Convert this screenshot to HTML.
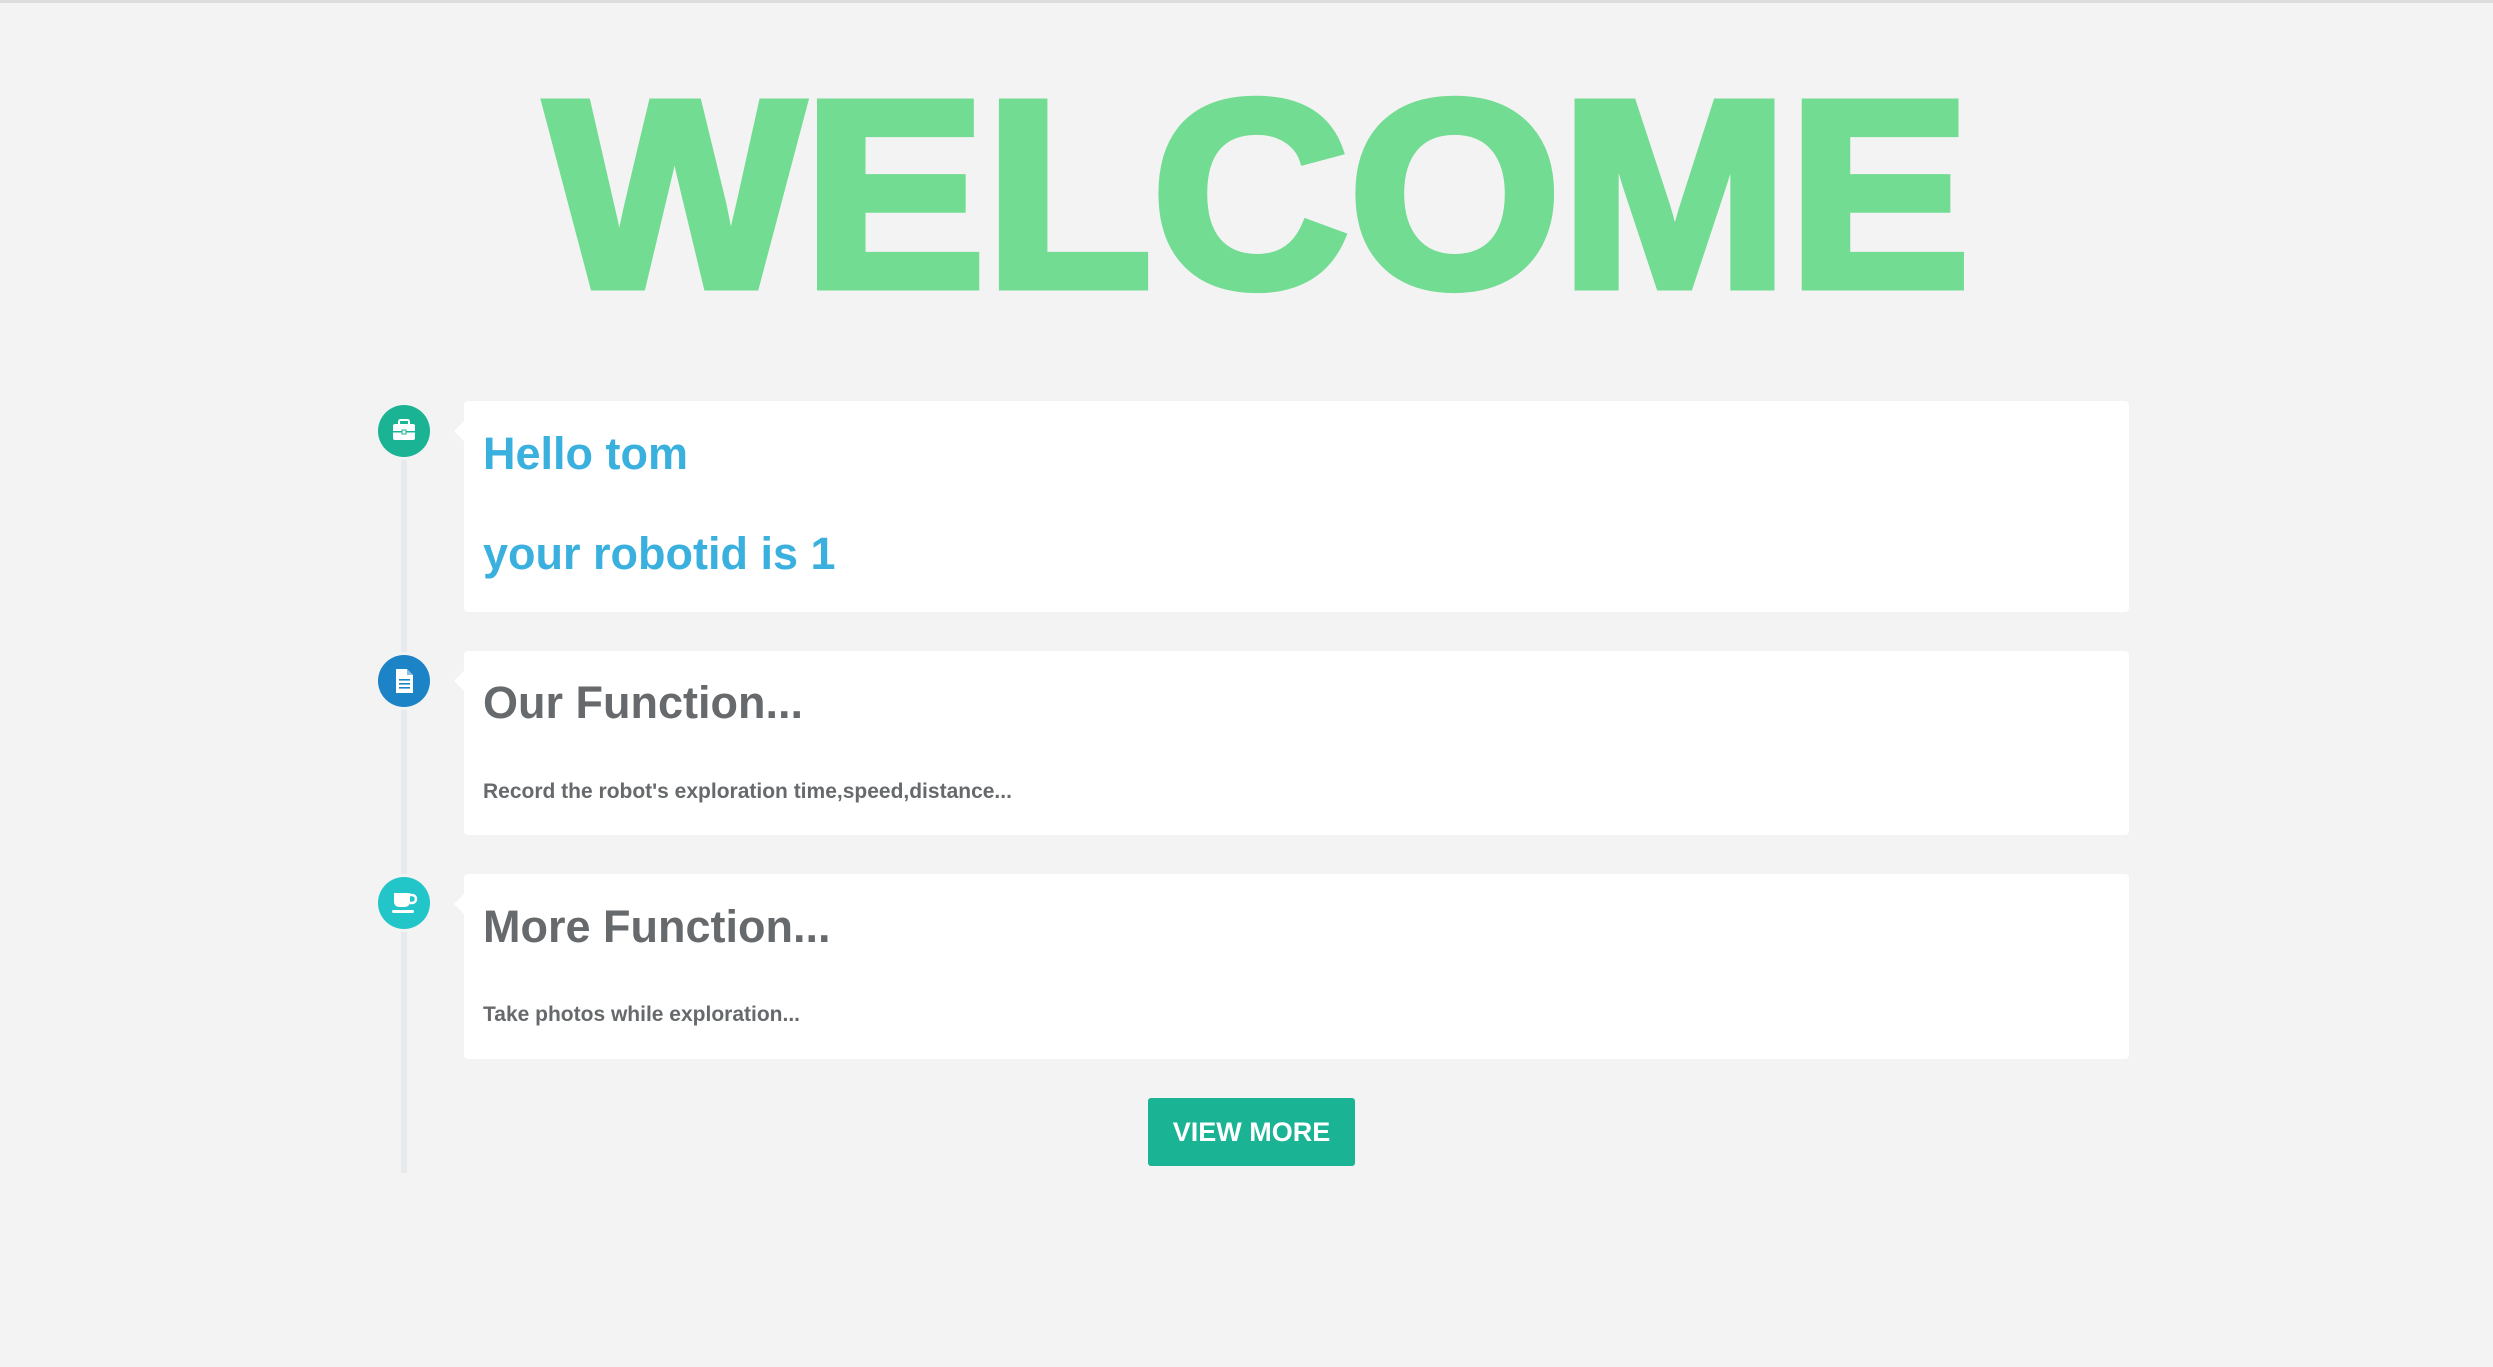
<!DOCTYPE html>
<html><head><meta charset="utf-8"><style>
html,body{margin:0;padding:0}
body{width:2493px;height:1367px;background:#f3f3f3;position:relative;overflow:hidden;font-family:"Liberation Sans",Arial,sans-serif}
.topbar{position:absolute;left:0;top:0;width:2493px;height:3px;background:#dcdcdc}
.line{position:absolute;left:401px;top:440px;width:6px;height:733px;background:#e7eaec}
.icon{position:absolute;left:378px;width:52px;height:52px;border-radius:50%;box-shadow:0 0 0 3px #f3f3f3}
.card{position:absolute;left:464px;width:1665px;background:#fff;border-radius:4px}
.card:before{content:"";position:absolute;left:-10px;top:20px;border:10px solid transparent;border-left:0;border-right-color:#fff}
.t{position:absolute;left:483px;font-weight:bold;white-space:nowrap;line-height:1}
.h{font-size:45px}
.blue{color:#3ab0de}
.grey{color:#676a6c}
.d{font-size:21px}
.btn{position:absolute;left:1148px;top:1098px;width:207px;height:68px;background:#1ab394;border-radius:3px;color:#fff;font-weight:bold;font-size:27px;line-height:68px;text-align:center}
</style></head><body>
<div class="topbar"></div>
<svg style="position:absolute;left:0;top:0" width="2493" height="320">
<text x="546" y="286" font-family="Liberation Sans,Arial,sans-serif" font-weight="bold" font-size="266" fill="#72dc93" stroke="#72dc93" stroke-width="9" stroke-linejoin="miter" textLength="1424" lengthAdjust="spacingAndGlyphs">WELCOME</text>
</svg>
<div class="line"></div>

<div class="card" style="top:401px;height:211px"></div>
<div class="icon" style="top:405px;background:#1ab394">
<svg width="52" height="52" viewBox="0 0 52 52"><rect x="21" y="15" width="10" height="5" rx="1.5" fill="none" stroke="#fff" stroke-width="2"/><rect x="15" y="19" width="22" height="16" rx="2" fill="#fff"/><rect x="15" y="26" width="22" height="1.5" fill="#1ab394"/><rect x="24" y="25" width="4" height="4" fill="#fff" stroke="#1ab394" stroke-width="1"/></svg></div>
<div class="t h blue" style="top:431px">Hello tom</div>
<div class="t h blue" style="top:531px">your robotid is 1</div>

<div class="card" style="top:651px;height:184px"></div>
<div class="icon" style="top:655px;background:#1c84c6">
<svg width="52" height="52" viewBox="0 0 52 52"><path d="M18 14h11l6 6v18H18z" fill="#fff"/><path d="M29 14v6h6" fill="#1c84c6" opacity=".5"/><rect x="21" y="24" width="11" height="1.6" fill="#1c84c6"/><rect x="21" y="28" width="11" height="1.6" fill="#1c84c6"/><rect x="21" y="32" width="11" height="1.6" fill="#1c84c6"/></svg></div>
<div class="t h grey" style="top:680px">Our Function...</div>
<div class="t d grey" style="top:781px">Record the robot's exploration time,speed,distance...</div>

<div class="card" style="top:874px;height:185px"></div>
<div class="icon" style="top:877px;background:#23c6c8">
<svg width="52" height="52" viewBox="0 0 52 52"><path d="M16 16h16v9a5 5 0 0 1-5 5h-6a5 5 0 0 1-5-5z" fill="#fff"/><path d="M32 18h2a4 4 0 0 1 0 8h-2" fill="none" stroke="#fff" stroke-width="2.5"/><rect x="14" y="33" width="22" height="3" rx="1.5" fill="#fff"/></svg></div>
<div class="t h grey" style="top:904px">More Function...</div>
<div class="t d grey" style="top:1004px">Take photos while exploration...</div>

<div class="btn">VIEW MORE</div>
</body></html>
